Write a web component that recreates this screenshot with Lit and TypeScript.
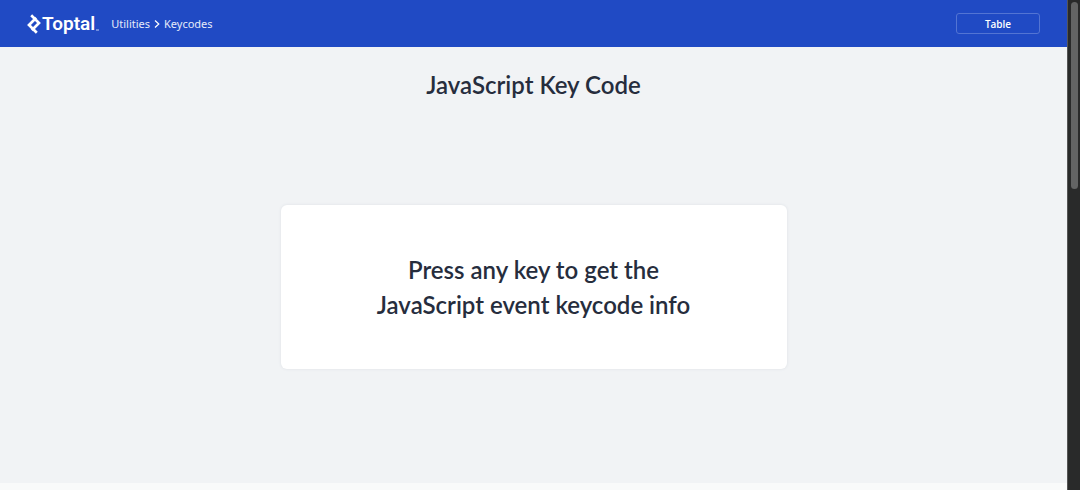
import { LitElement, html, css } from "lit";
import { customElement } from "lit/decorators.js";

@customElement("app-root")
export class AppRoot extends LitElement {
  static styles = css`
    :host {
      display: flex;
      height: 100vh;
      overflow: hidden;
      background: #f9fafa;
      color: #262d3d;
      font-family: "Lato", sans-serif;
    }
    .page {
      flex: 1;
      min-width: 0;
      display: flex;
      flex-direction: column;
    }
    .bar {
      display: flex;
      align-items: center;
      height: 47px;
      padding: 0 27px;
      box-sizing: border-box;
      background: #204ac4;
      color: #fff;
    }
    .brand {
      display: flex;
      align-items: center;
      gap: 1px;
      color: inherit;
      text-decoration: none;
      font: 600 19px/24px "Roboto", sans-serif;
    }
    .mark {
      width: 14px;
      height: 20px;
    }
    .dot {
      align-self: flex-end;
      width: 3px;
      height: 2px;
      margin-bottom: 5px;
      background: #6f8bdc;
    }
    .crumbs {
      flex: 1;
      display: flex;
      align-items: center;
      gap: 4px;
      margin-left: 12px;
      font: 400 11px/16px "Noto Sans", sans-serif;
    }
    .crumbs a {
      color: #e6ebf9;
      text-decoration: none;
    }
    .sep {
      width: 6px;
      height: 8px;
    }
    .table {
      width: 84px;
      height: 21px;
      padding: 0;
      border: 1px solid #5374d3;
      border-radius: 3px;
      background: none;
      color: #fff;
      font: 600 10px/16px "Open Sans", sans-serif;
    }
    .main {
      flex: 1;
      display: flex;
      flex-direction: column;
      align-items: center;
      margin-bottom: 7px;
      padding: 22px 24px 0;
      background: #f1f3f5;
    }
    h1,
    .prompt {
      margin: 0;
      font-size: 24px;
      font-weight: 600;
      line-height: 32px;
      text-align: center;
    }
    .card {
      width: 100%;
      max-width: 506px;
      box-sizing: border-box;
      margin-top: 104px;
      padding: 47px 24px;
      border-radius: 6px;
      background: #fff;
      box-shadow: 0 0 3px #dcdfe5;
    }
    .prompt {
      line-height: 35px;
    }
    .track {
      width: 13px;
      padding: 2px 2px 0 3px;
      box-sizing: border-box;
      border-left: 1px solid #555;
      background: #292a2a;
    }
    .thumb {
      height: 187px;
      border-radius: 4px;
      background: #636464;
    }
  `;

  render() {
    return html`
      <div class="page">
        <header class="bar">
          <a class="brand" href="#">
            <svg class="mark" viewBox="0 0 14 20" fill="none" stroke="#fff" stroke-width="2.7" aria-hidden="true">
              <path d="M4.2 1.2L12 9L4.8 16.2M9.8 18.8L2 11L9.2 3.8" />
            </svg>
            <span>Toptal</span><span class="dot"></span>
          </a>
          <nav class="crumbs" aria-label="Breadcrumb">
            <a href="#">Utilities</a>
            <svg class="sep" viewBox="0 0 6 8" fill="none" stroke="#fff" stroke-width="1.2" aria-hidden="true">
              <path d="M1 0.5L4.8 4L1 7.5" />
            </svg>
            <a href="#">Keycodes</a>
          </nav>
          <button class="table" type="button">Table</button>
        </header>
        <main class="main">
          <h1>JavaScript Key Code</h1>
          <section class="card">
            <p class="prompt">Press any key to get the<br />JavaScript event keycode info</p>
          </section>
        </main>
      </div>
      <div class="track"><div class="thumb"></div></div>
    `;
  }
}
